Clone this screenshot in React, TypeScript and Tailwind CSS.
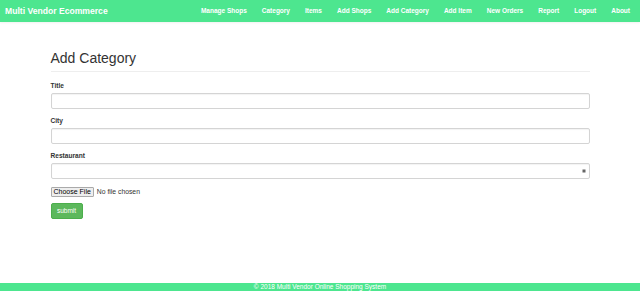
import React from "react";

const NAV = [
  "Manage Shops",
  "Category",
  "Items",
  "Add Shops",
  "Add Category",
  "Add Item",
  "New Orders",
  "Report",
  "Logout",
  "About",
];

function Field({ label, children }: { label: string; children: React.ReactNode }) {
  return (
    <div className="mb-[8px]">
      <div className="mb-[3px] text-[6.6px] font-bold leading-[8px] text-[#333]">{label}</div>
      {children}
    </div>
  );
}

export default function App() {
  return (
    <div className="flex h-screen flex-col bg-white font-['Liberation_Sans',Arial,sans-serif]">
      <nav className="flex h-[22px] shrink-0 items-center justify-between bg-[#4de68f] pl-[5px] pr-[10px] shadow-[0_1px_2px_rgba(0,0,0,0.06)]">
        <span className="text-[8.6px] font-bold text-white">Multi Vendor Ecommerce</span>
        <div className="flex gap-[15px]">
          {NAV.map((n) => (
            <span key={n} className="text-[6.5px] font-bold text-white">
              {n}
            </span>
          ))}
        </div>
      </nav>

      <main className="flex-1">
        <div className="mx-auto w-[539px]">
          <h1 className="mt-[28px] text-[14px] leading-[16px] text-[#333]">Add Category</h1>
          <div className="mt-[5px] mb-[10px] h-px bg-[#eee]" />

          <Field label="Title">
            <div className="h-[16px] rounded-[2px] border border-[#d4d4d4] shadow-[inset_0_1px_1px_rgba(0,0,0,0.05)]" />
          </Field>
          <Field label="City">
            <div className="h-[16px] rounded-[2px] border border-[#d4d4d4] shadow-[inset_0_1px_1px_rgba(0,0,0,0.05)]" />
          </Field>
          <Field label="Restaurant">
            <div className="flex h-[16px] items-center justify-end rounded-[2px] border border-[#d4d4d4] pr-[3px] shadow-[inset_0_1px_1px_rgba(0,0,0,0.05)]">
              <svg width="4" height="4" viewBox="0 0 4 4">
                <rect x="0.5" y="0.5" width="3" height="3" fill="#666" />
              </svg>
            </div>
          </Field>

          <div className="flex items-center gap-[3px]">
            <span className="flex h-[10px] items-center rounded-[1px] border border-[#aaa] bg-[#eee] px-[2px] text-[7px] text-black">
              Choose File
            </span>
            <span className="text-[6.8px] text-[#333]">No file chosen</span>
          </div>

          <button className="mt-[6px] flex h-[16px] w-[32px] items-center justify-center rounded-[2px] border border-[#4cae4c] bg-[#5cb85c] text-[6.5px] text-white">
            submit
          </button>
        </div>
      </main>

      <footer className="flex h-[8px] shrink-0 items-center justify-center bg-[#4de68f] text-[6.5px] leading-[8px] text-white">
        © 2018 Multi Vendor Online Shopping System
      </footer>
    </div>
  );
}
